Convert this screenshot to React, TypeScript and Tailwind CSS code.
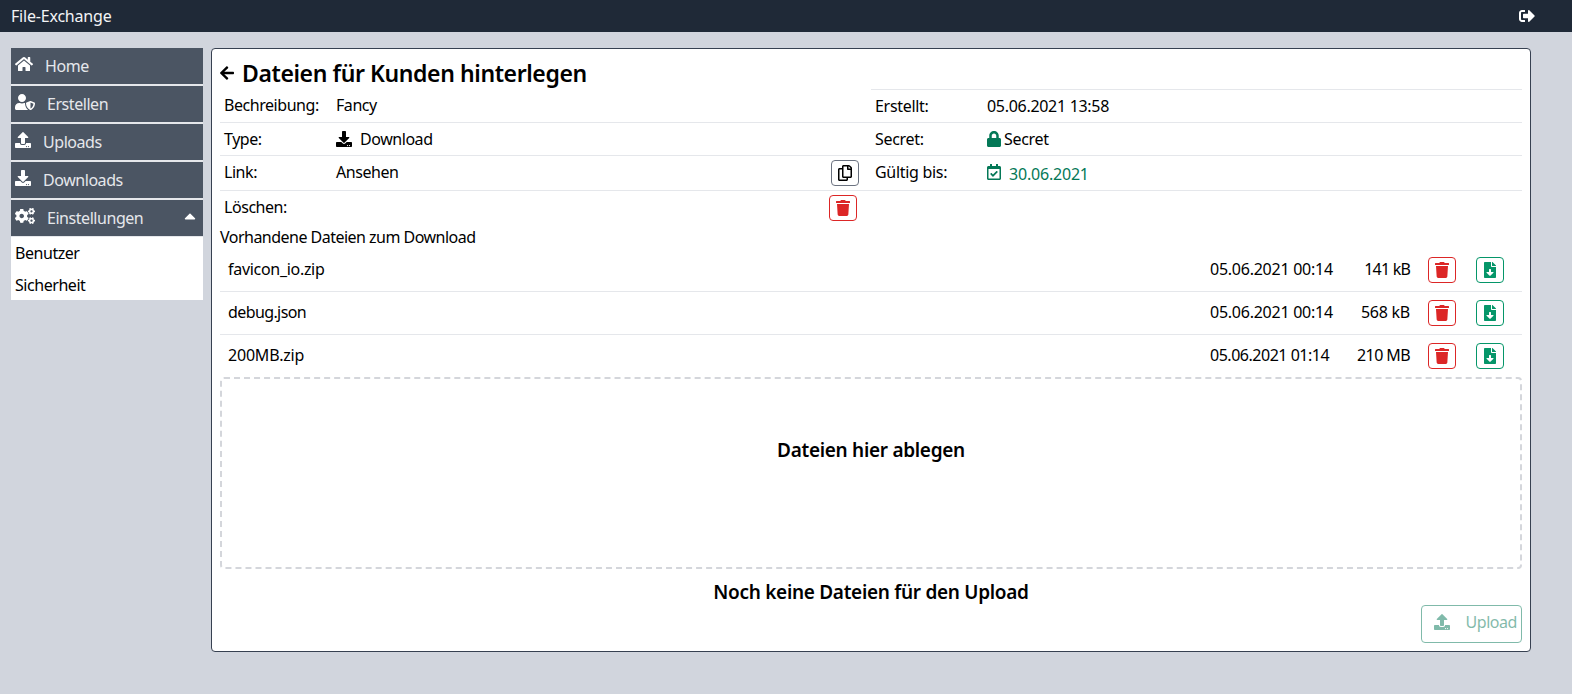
import type { ReactNode } from 'react';
import {
  FaArrowLeft, FaCaretUp, FaCogs, FaDownload, FaFileDownload, FaHome, FaLock,
  FaRegCalendarCheck, FaRegCopy, FaSignOutAlt, FaTrash, FaUpload, FaUserShield,
} from 'react-icons/fa';

type NavProps = { icon: ReactNode; label: string; open?: boolean };

function NavItem({ icon, label, open }: NavProps) {
  return (
    <a className="flex h-9 items-start gap-3 bg-[#4b5563] pl-1 pr-1 text-[#e5e7eb]">
      <span className="mt-2 text-white">{icon}</span>
      <span className="mt-1.5">{label}</span>
      {open && <FaCaretUp size={18} className="ml-auto mt-[7px] text-white" />}
    </a>
  );
}

function Row({ label, children, className = '' }: { label: string; children?: ReactNode; className?: string }) {
  return (
    <div className={`flex border-t px-1 ${className}`}>
      <div className="w-28 shrink-0">{label}</div>
      <div className="flex flex-1 items-start">{children}</div>
    </div>
  );
}

function IconButton({ children, className }: { children: ReactNode; className: string }) {
  return (
    <button className={`flex h-[26px] w-7 shrink-0 items-center justify-center rounded border ${className}`}>
      {children}
    </button>
  );
}

const files = [
  { name: 'favicon_io.zip', date: '05.06.2021 00:14', size: '141 kB', nameFit: 'tracking-[-0.3px]', dateFit: 'tracking-[-0.25px]', sizeFit: 'tracking-[-0.8px]' },
  { name: 'debug.json', date: '05.06.2021 00:14', size: '568 kB', nameFit: 'tracking-[-0.6px]', dateFit: 'tracking-[-0.25px]', sizeFit: 'tracking-[-0.25px]' },
  { name: '200MB.zip', date: '05.06.2021 01:14', size: '210 MB', nameFit: 'tracking-[-0.2px]', dateFit: 'tracking-[-0.48px]', sizeFit: 'tracking-[-0.6px]' },
];

export default function App() {
  return (
    <div className="min-h-screen bg-[#d1d5dd] font-['Noto_Sans',sans-serif] text-[16px] leading-6 tracking-[-0.45px] text-black">
      <header className="flex h-8 items-center justify-between bg-[#1f2937] pl-[11px] pr-[37px] text-[#f3f4f6]">
        <span className="tracking-[-0.2px]">File-Exchange</span>
        <FaSignOutAlt className="text-white" />
      </header>
      <div className="flex items-start gap-2 pl-[11px] pr-[41px] pt-4">
        <nav className="w-48 shrink-0">
          <div className="flex flex-col gap-0.5 bg-[#e5e7eb] pb-px">
            <NavItem icon={<FaHome size={18} className="-mt-px" />} label="Home" />
            <NavItem icon={<FaUserShield size={20} className="-mt-0.5" />} label="Erstellen" />
            <NavItem icon={<FaUpload />} label="Uploads" />
            <NavItem icon={<FaDownload />} label="Downloads" />
            <NavItem icon={<FaCogs size={20} className="-mt-0.5" />} label="Einstellungen" open />
          </div>
          <div className="bg-white px-1 pb-[3px]">
            <div className="pb-1 pt-1">Benutzer</div>
            <div className="pt-1">Sicherheit</div>
          </div>
        </nav>
        <main className="min-w-0 flex-1 rounded border border-[#374151] bg-white p-2">
          <div className="flex h-8 items-center gap-2">
            <FaArrowLeft size={16} className="-ml-px -mr-px" />
            <h1 className="text-[23px] font-semibold tracking-[-0.4px]">Dateien für Kunden hinterlegen</h1>
          </div>
          <div className="grid grid-cols-2">
            <div className="[&>div]:border-[#e5e7eb]">
              <Row label="Bechreibung:" className="h-[33px] border-t-transparent! pt-[3px]">Fancy</Row>
              <Row label="Type:" className="h-[33px] pt-1">
                <FaDownload className="mr-2 mt-1" />Download
              </Row>
              <Row label="Link:" className="h-[35px] pt-1">
                <span className="flex-1">Ansehen</span>
                <IconButton className="mr-2 border-[#6b7280]"><FaRegCopy /></IconButton>
              </Row>
              <Row label="Löschen:" className="h-[35px] pt-1">
                <span className="flex-1" />
                <IconButton className="mr-2.5 border-[#dc2626] text-[#dc2626]"><FaTrash /></IconButton>
              </Row>
            </div>
            <div className="tracking-[-0.3px] [&>div]:border-[#e5e7eb]">
              <Row label="Erstellt:" className="h-[33px] pt-1">05.06.2021 13:58</Row>
              <Row label="Secret:" className="h-[33px] pt-1">
                <FaLock className="-ml-px mr-0.5 mt-1 text-[#047857]" />Secret
              </Row>
              <Row label="Gültig bis:" className="h-[35px] pt-1">
                <span className="flex text-[#047857]">
                  <FaRegCalendarCheck className="-ml-px mr-[7px] mt-1" />
                  <span className="mt-0.5 tracking-[-0.2px]">30.06.2021</span>
                </span>
              </Row>
              <div className="border-t" />
            </div>
          </div>
          <div className="tracking-[-0.52px]">Vorhandene Dateien zum Download</div>
          <div className="divide-y divide-[#e5e7eb]">
            {files.map((f) => (
              <div key={f.name} className="box-content flex h-[42px] items-start pl-2 pr-[18px]">
                <span className={`mt-2 flex-1 ${f.nameFit}`}>{f.name}</span>
                <span className={`mt-2 w-32 ${f.dateFit}`}>{f.date}</span>
                <span className={`mt-2 w-[72px] text-right ${f.sizeFit}`}>{f.size}</span>
                <IconButton className="ml-[18px] mt-2 border-[#dc2626] text-[#dc2626]"><FaTrash /></IconButton>
                <IconButton className="ml-5 mt-2 border-[#059669] text-[#059669]"><FaFileDownload /></IconButton>
              </div>
            ))}
          </div>
          <div className="flex h-48 items-center justify-center rounded border-2 border-dashed border-[#d4d6db] pb-[46px] text-[19px] leading-7 font-semibold tracking-[-0.3px]">
            Dateien hier ablegen
          </div>
          <div className="mb-[-1px] mt-[9px] text-center text-[19px] leading-7 font-semibold tracking-[-0.3px]">Noch keine Dateien für den Upload</div>
          <div className="flex justify-end">
            <button className="flex h-[38px] w-[101px] items-start justify-between rounded border border-[#047857] pl-3 pr-1 pt-1 text-[#047857] opacity-50">
              <FaUpload className="mt-1" />
              <span>Upload</span>
            </button>
          </div>
        </main>
      </div>
    </div>
  );
}
